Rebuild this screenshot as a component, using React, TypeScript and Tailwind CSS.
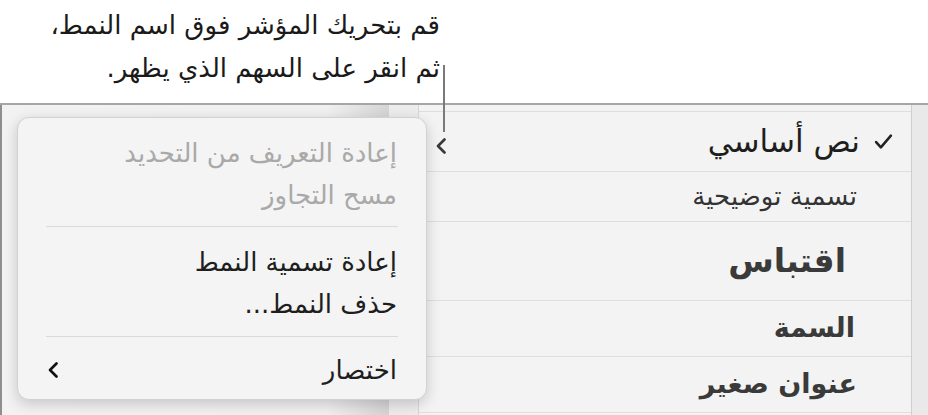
import React from 'react';

const FONT = '"DejaVu Sans", "Noto Sans Arabic", sans-serif';

type MenuItem = { label: string; disabled?: boolean; submenu?: boolean };

const MENU_TOP: MenuItem[] = [
  { label: 'إعادة التعريف من التحديد', disabled: true },
  { label: 'مسح التجاوز', disabled: true },
];
const MENU_MID: MenuItem[] = [{ label: 'إعادة تسمية النمط' }, { label: 'حذف النمط...' }];

function Chevron({ className }: { className?: string }) {
  return (
    <svg viewBox="0 0 12 18" className={className} fill="none" stroke="currentColor" strokeWidth={2.7} strokeLinecap="round" strokeLinejoin="round">
      <path d="M9.5 2.5 L3 9 L9.5 15.5" />
    </svg>
  );
}

function Check({ className }: { className?: string }) {
  return (
    <svg viewBox="0 0 18 16" className={className} fill="none" stroke="currentColor" strokeWidth={2.4} strokeLinecap="round" strokeLinejoin="round">
      <path d="M2 8.5 L6.5 13.5 L16 2.5" />
    </svg>
  );
}

function MenuRow({ item }: { item: MenuItem }) {
  return (
    <div
      dir="rtl"
      className={`flex h-[42px] items-center justify-between whitespace-nowrap px-[29px] text-[26px] ${item.disabled ? 'text-[#a9a9a9]' : 'text-[#1e1e1e]'}`}
    >
      <span>{item.label}</span>
      {item.submenu && <Chevron className="h-[18px] w-[12px] text-[#111]" />}
    </div>
  );
}

export default function App() {
  return (
    <div className="relative h-[415px] w-[928px] overflow-hidden bg-white" style={{ fontFamily: FONT }}>
      {/* callout */}
      <div dir="rtl" className="h-[103px] w-[464px] whitespace-nowrap pr-[24px] pt-[4px] text-right text-[26px] leading-[43px] text-[#1a1a1a]">
        <p>قم بتحريك المؤشر فوق اسم النمط،</p>
        <p>ثم انقر على السهم الذي يظهر.</p>
      </div>

      {/* window */}
      <div className="flex h-[312px] border-t-2 border-[#a6a6a6]">
        <div className="w-[389px] border-l-2 border-[#8e8e8e] bg-[linear-gradient(to_right,#f2f2f2_0%,#f0f0f0_84%,#d4d4d4_100%)]" />
        <div className="w-[30px] border-r border-[#d6d6d6] bg-[#ececec]" />
        <div className="flex-1 whitespace-nowrap bg-[#f3f3f3] pt-[6px]">
          <div className="border-t border-[#dedede]">
            <div dir="rtl" className="relative flex h-[60px] items-center gap-[14px] border-b border-[#dedede] pr-[18px] text-[31px] text-[#1e1e1e]">
              <Check className="h-[17px] w-[19px] text-[#222]" />
              <span>نص أساسي</span>
              <Chevron className="absolute left-[16px] top-[25px] h-[18px] w-[12px] text-[#3a3a3a]" />
            </div>
            <div dir="rtl" className="flex h-[50px] items-center border-b border-[#dedede] pr-[54px] text-[26px] text-[#333]">
              تسمية توضيحية
            </div>
            <div dir="rtl" className="flex h-[79px] items-center border-b border-[#dedede] pr-[65px] text-[33px] font-bold text-[#3a3a3a]">
              اقتباس
            </div>
            <div dir="rtl" className="flex h-[56px] items-center border-b border-[#dedede] pr-[56px] text-[27px] font-bold text-[#3a3a3a]">
              السمة
            </div>
            <div dir="rtl" className="flex h-[56px] items-center border-b border-[#dedede] pr-[54px] text-[27px] font-bold text-[#3a3a3a]">
              عنوان صغير
            </div>
          </div>
        </div>
        <div className="w-[17px] border-l border-[#cfcfcf] bg-[#e9e9e9]" />
      </div>

      {/* leader line */}
      <div className="absolute left-[443px] top-[65px] h-[67px] w-[2px] bg-[#7a7a7a]" />

      {/* context menu */}
      <div className="absolute left-[17px] top-[117px] h-[283px] w-[410px] rounded-[12px] border border-[#d2d2d2] bg-[#f4f4f4] pt-[14px] shadow-[0_4px_14px_rgba(0,0,0,0.18)]">
        {MENU_TOP.map((m) => (
          <MenuRow key={m.label} item={m} />
        ))}
        <div className="mx-[28px] mb-[14px] mt-[10px] h-px bg-[#dadada]" />
        {MENU_MID.map((m) => (
          <MenuRow key={m.label} item={m} />
        ))}
        <div className="mx-[28px] mb-[12px] mt-[11px] h-px bg-[#dadada]" />
        <MenuRow item={{ label: 'اختصار', submenu: true }} />
      </div>
    </div>
  );
}
